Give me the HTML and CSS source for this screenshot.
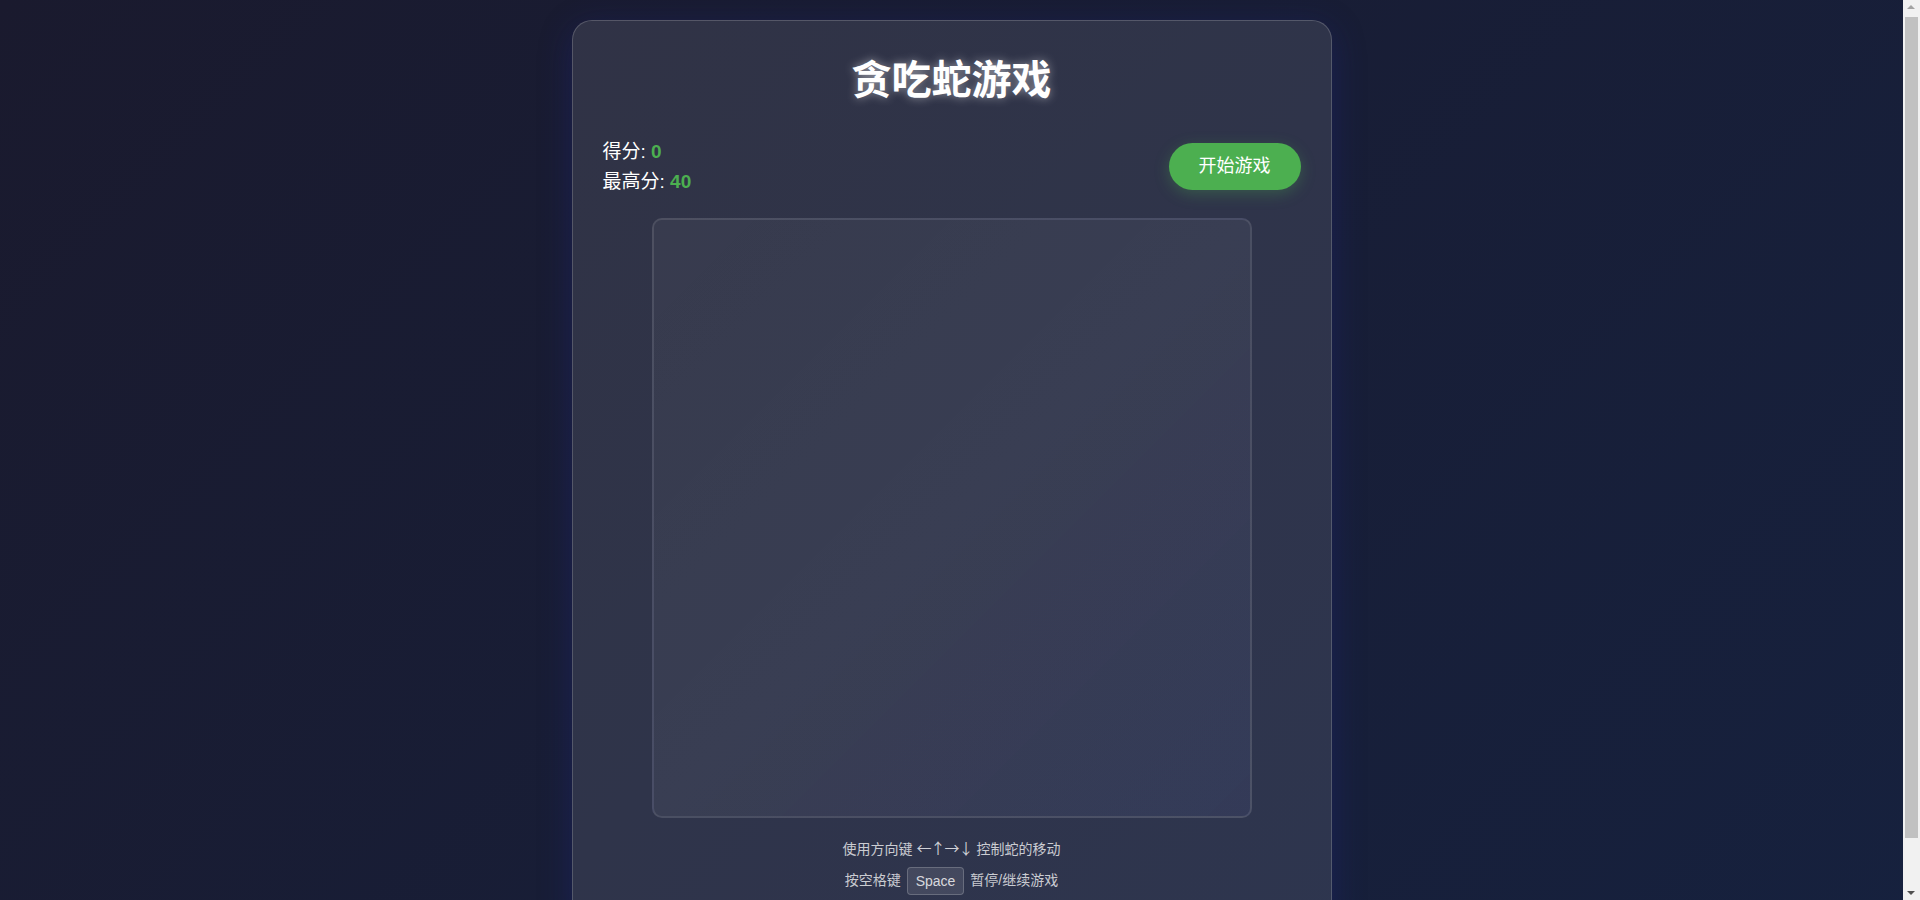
FILE: index.html
```html
<!DOCTYPE html>
<html lang="zh-CN">
<head>
<meta charset="utf-8">
<title>贪吃蛇游戏</title>
<link rel="stylesheet" href="styles.css">
</head>
<body>
<div class="game-card">
  <h1 class="title">贪吃蛇游戏</h1>
  <div class="score-row">
    <div class="scores">
      <div class="score-line">得分: <span class="score-value">0</span></div>
      <div class="score-line">最高分: <span class="score-value">40</span></div>
    </div>
    <button class="start-btn">开始游戏</button>
  </div>
  <div class="board"></div>
  <div class="instructions">
    <p class="hint">使用方向键 <span class="arrows">←↑→↓</span> 控制蛇的移动</p>
    <p class="hint">按空格键 <span class="kbd">Space</span> 暂停/继续游戏</p>
  </div>
</div>
<div class="scrollbar">
  <div class="sb-arrow sb-up"></div>
  <div class="sb-track"><div class="sb-thumb"></div></div>
  <div class="sb-arrow sb-down"></div>
</div>
</body>
</html>
```
FILE: styles.css
```css
html, body {
  margin: 0;
}
html {
  overflow: hidden;
}
body {
  padding: 20px 37px 20px 20px;
  background: linear-gradient(135deg, #1a1a2e 0%, #16213e 100%);
  font-family: "Liberation Sans", "Noto Sans CJK SC", sans-serif;
  color: #fff;
  display: flex;
  justify-content: center;
  min-height: 100vh;
  box-sizing: border-box;
}
.game-card {
  width: 760px;
  box-sizing: border-box;
  padding: 28px 30px 30px;
  border-radius: 20px;
  border: 1px solid rgba(255, 255, 255, 0.18);
  background: rgba(255, 255, 255, 0.1);
  box-shadow: 0 8px 32px 0 rgba(31, 38, 135, 0.37);
  align-self: flex-start;
}
.title {
  margin: 0 0 35px;
  font-size: 40px;
  line-height: 56px;
  font-weight: 700;
  text-align: center;
  font-family: "Noto Sans CJK SC", sans-serif;
  text-shadow: 0 0 10px rgba(255, 255, 255, 0.5);
}
.score-row {
  display: flex;
  justify-content: space-between;
  align-items: center;
  margin-bottom: 24px;
}
.scores {
  display: flex;
  flex-direction: column;
  gap: 6px;
}
.score-line {
  font-size: 19px;
  line-height: 24px;
}
.score-value {
  color: #4caf50;
  font-weight: 700;
}
.start-btn {
  font-family: "Liberation Sans", "Noto Sans CJK SC", sans-serif;
  font-size: 18px;
  line-height: 23px;
  padding: 12px 30px;
  margin-top: -2px;
  border: none;
  border-radius: 25px;
  background: #4caf50;
  color: #fff;
  box-shadow: 0 4px 15px rgba(76, 175, 80, 0.3);
  cursor: pointer;
}
.board {
  width: 600px;
  height: 600px;
  box-sizing: border-box;
  margin: 0 auto;
  border: 2px solid rgba(255, 255, 255, 0.1);
  border-radius: 10px;
  background: linear-gradient(135deg, rgba(255, 255, 255, 0.04) 0%, rgba(255, 255, 255, 0.05) 50%, rgba(120, 130, 220, 0.08) 100%);
}
.instructions {
  margin-top: 18px;
  text-align: center;
}
.hint {
  margin: 5px 0;
  font-size: 14px;
  line-height: 26px;
  color: rgba(255, 255, 255, 0.75);
}
.arrows {
  font-family: "Noto Sans CJK SC", sans-serif;
  font-size: 15px;
  line-height: 1;
  letter-spacing: -1px;
  color: #d0d1d8;
}
.kbd {
  display: inline-block;
  padding: 5px 8px;
  line-height: 16px;
  margin: -4px 2px;
  background: rgba(255, 255, 255, 0.1);
  border: 1px solid rgba(255, 255, 255, 0.2);
  border-radius: 4px;
  color: rgba(255, 255, 255, 0.8);
  vertical-align: middle;
}
.scrollbar {
  position: fixed;
  top: 0;
  right: 0;
  width: 17px;
  height: 100vh;
  background: #f1f1f1;
  display: flex;
  flex-direction: column;
}
.sb-arrow {
  height: 17px;
  flex: none;
  position: relative;
}
.sb-up::after, .sb-down::after {
  content: "";
  position: absolute;
  left: 4px;
  border-left: 4px solid transparent;
  border-right: 4px solid transparent;
}
.sb-up::after {
  top: 5px;
  border-bottom: 4px solid #a3a3a3;
}
.sb-down::after {
  bottom: 5px;
  border-top: 4px solid #505050;
}
.sb-track {
  flex: 1;
  padding: 0 2px;
}
.sb-thumb {
  height: 821px;
  background: #c1c1c1;
}
```
